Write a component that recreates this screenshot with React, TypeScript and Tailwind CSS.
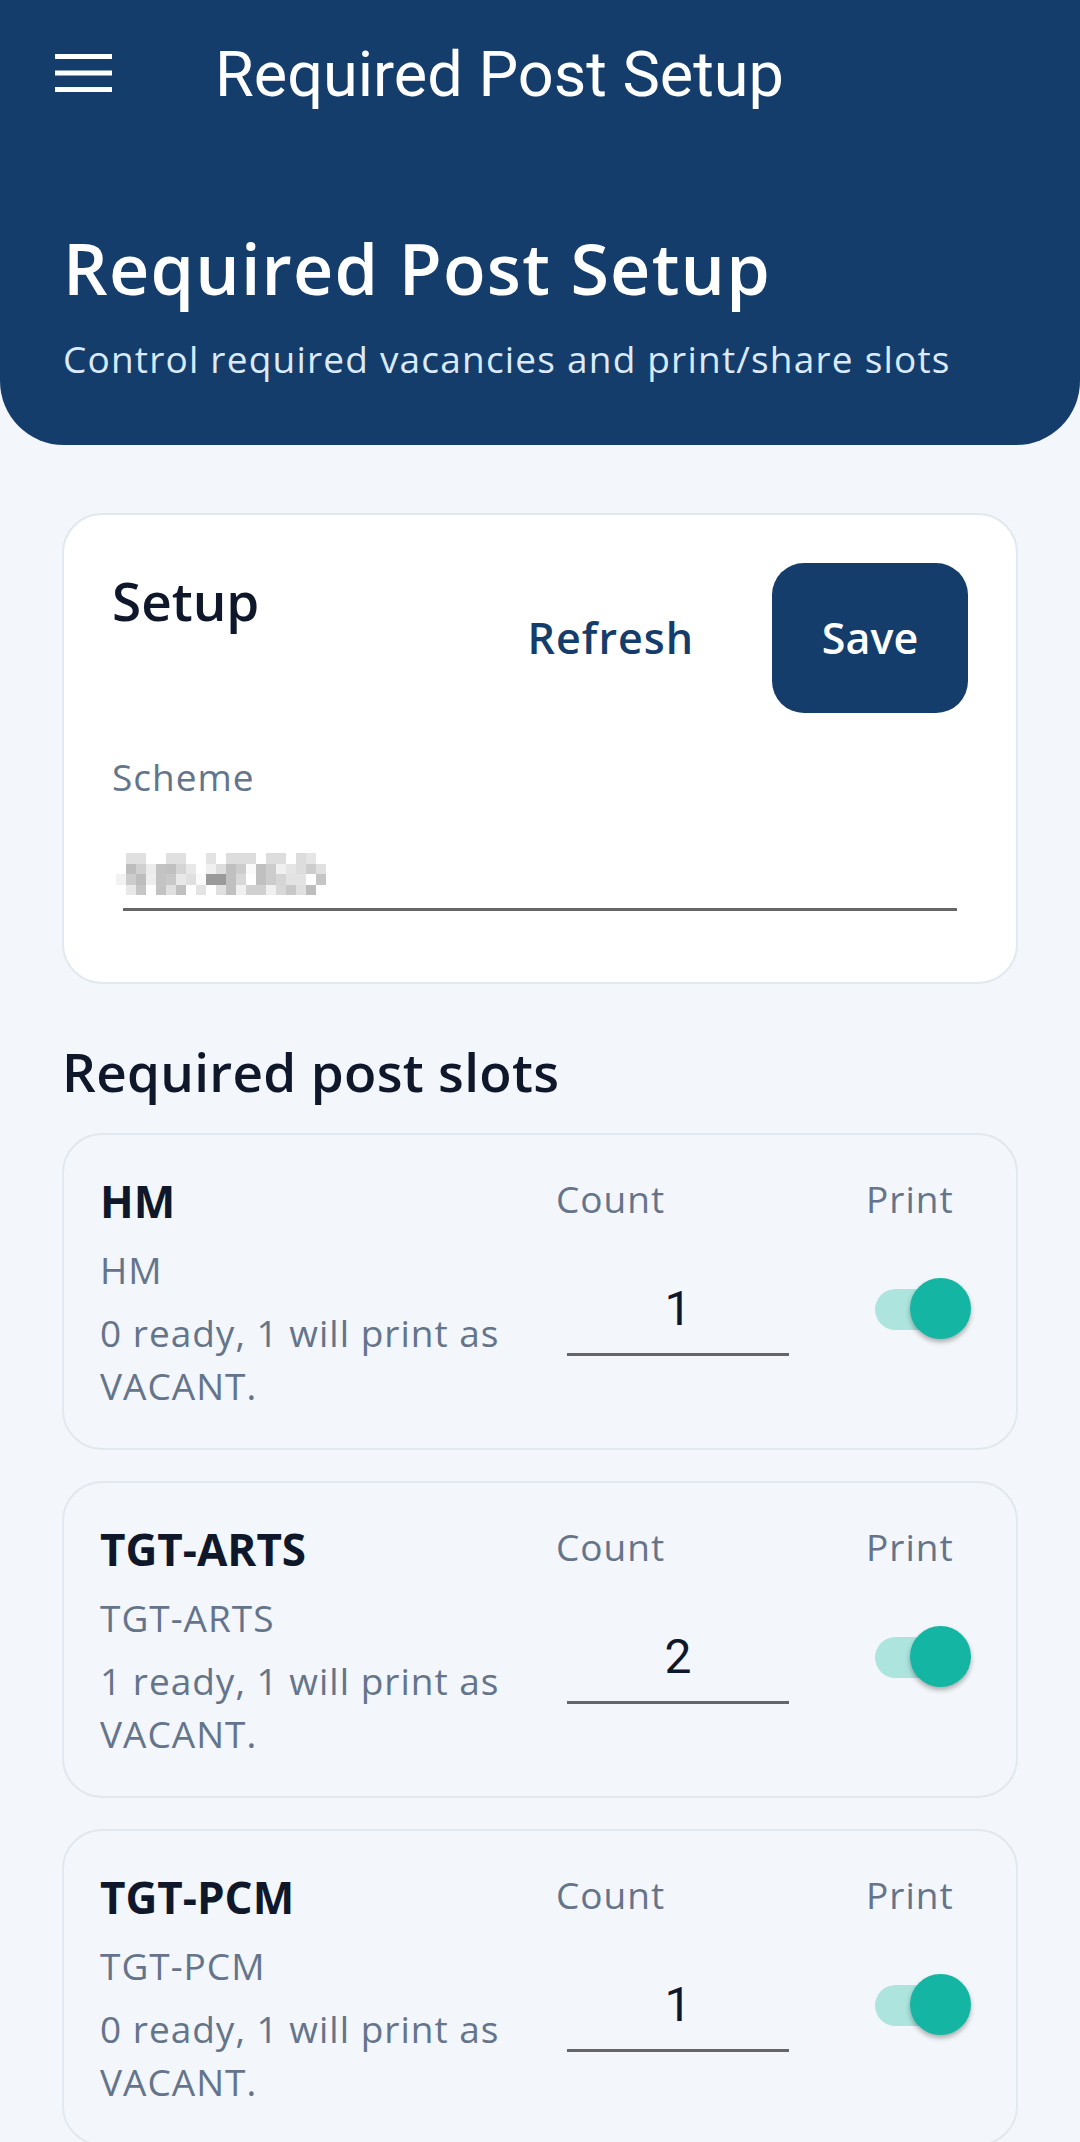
import { useState } from "react";

// Required post setup screen: scheme picker plus per-post slot counts and
// a print toggle for each slot.

const SANS = "font-['Open_Sans','Noto_Sans',sans-serif]";

// blurred scheme name, drawn as a mosaic like the privacy-masked screenshot
const MOSAIC: string[][] = [
  ["fff", "e0e0e0", "e0e0e0", "fff", "fff", "e0e0e0", "e0e0e0", "fff", "fff", "e3e3e3", "fff", "ddd", "ddd", "ddd", "fff", "ddd", "ddd", "fff", "ddd", "e5e5e5", "fff"],
  ["fff", "bdbdbd", "d0d0d0", "ececec", "c3c3c3", "c0c0c0", "d5d5d5", "e8e8e8", "fff", "f0f0f0", "ddd", "c0c0c0", "ccc", "fafafa", "c0c0c0", "ccc", "f0f0f0", "e5e5e5", "ddd", "cdcdcd", "e0e0e0"],
  ["f2f2f2", "ccc", "bdbdbd", "eee", "c3c3c3", "c8c8c8", "e8e8e8", "e0e0e0", "fafafa", "9a9a9a", "9a9a9a", "c0c0c0", "d8d8d8", "fff", "c0c0c0", "ccc", "d5d5d5", "e3e3e3", "e3e3e3", "fff", "c5c5c5"],
  ["fff", "e8e8e8", "c5c5c5", "fff", "c3c3c3", "e0e0e0", "c0c0c0", "fff", "e3e3e3", "fff", "e0e0e0", "c0c0c0", "f0f0f0", "d0d0d0", "d0d0d0", "f0f0f0", "d8d8d8", "c8c8c8", "e0e0e0", "bdbdbd", "fff"],
];

type Slot = { code: string; name: string; count: number; ready: number; vacant: number };

const SLOTS: Slot[] = [
  { code: "HM", name: "HM", count: 1, ready: 0, vacant: 1 },
  { code: "TGT-ARTS", name: "TGT-ARTS", count: 2, ready: 1, vacant: 1 },
  { code: "TGT-PCM", name: "TGT-PCM", count: 1, ready: 0, vacant: 1 },
];

function MenuIcon() {
  return (
    <svg width="57" height="38" viewBox="0 0 57 38" fill="#fff" aria-hidden="true">
      <rect x="0" y="0" width="57" height="5" />
      <rect x="0" y="16.5" width="57" height="5" />
      <rect x="0" y="33" width="57" height="5" />
    </svg>
  );
}

function Toggle({ on, onChange }: { on: boolean; onChange: () => void }) {
  return (
    <button
      type="button"
      role="switch"
      aria-checked={on}
      onClick={onChange}
      className="relative w-[96px] h-[61px] cursor-pointer"
    >
      <span
        className={
          on
            ? "absolute left-0 top-[11px] w-[86px] h-[41px] rounded-full bg-[#ade4de]"
            : "absolute left-0 top-[11px] w-[86px] h-[41px] rounded-full bg-[#cbd5e1]"
        }
      />
      <span
        className={
          on
            ? "absolute right-0 top-0 w-[61px] h-[61px] rounded-full bg-[#14b5a3] shadow-[0_3px_5px_rgba(0,0,0,0.3)]"
            : "absolute right-[35px] top-0 w-[61px] h-[61px] rounded-full bg-[#f8fafc] shadow-[0_3px_5px_rgba(0,0,0,0.3)]"
        }
      />
    </button>
  );
}

function SlotCard({ slot }: { slot: Slot }) {
  const [count, setCount] = useState(String(slot.count));
  const [print, setPrint] = useState(true);

  return (
    <div className="mx-[62px] h-[317px] rounded-[40px] border-2 border-[#e2e8f0] bg-[#f3f6fa] pt-[38px] pl-[36px] pr-[36px] flex">
      <div className="flex-1 min-w-0">
        <div className="text-[44px] leading-[57px] font-bold text-[#0f172a]">{slot.code}</div>
        <div className="mt-[14px] text-[37px] leading-[52px] tracking-[1px] text-[#64748b]">{slot.name}</div>
        <div className="mt-[10px] text-[37px] leading-[53px] tracking-[1px] text-[#64748b]">
          {slot.ready} ready, {slot.vacant} will print as VACANT.
        </div>
      </div>
      <div className="ml-[26px] w-[244px] shrink-0">
        <div className="text-[37px] leading-[52px] tracking-[1px] text-[#64748b]">Count</div>
        <div className="mx-[11px] mt-[56px] border-b-[3px] border-[#666] pb-[16px]">
          <input
            value={count}
            onChange={(e) => setCount(e.target.value)}
            inputMode="numeric"
            className="w-full bg-transparent text-center outline-none font-['Roboto',sans-serif] text-[48px] leading-[56px] h-[56px] text-[#0f172a]"
          />
        </div>
      </div>
      <div className="ml-[66px] w-[114px] shrink-0">
        <div className="text-[37px] leading-[52px] tracking-[1px] text-[#64748b]">Print</div>
        <div className="mt-[53px] ml-[9px]">
          <Toggle on={print} onChange={() => setPrint((p) => !p)} />
        </div>
      </div>
    </div>
  );
}

export default function App() {
  return (
    <div className={`min-h-screen w-[1080px] bg-[#f3f6fa] pb-[60px] ${SANS}`}>
      {/* app bar + page intro */}
      <header className="bg-[#143d6b] rounded-b-[64px] pb-[61px]">
        <div className="h-[150px] flex items-center">
          <button type="button" aria-label="Open menu" className="ml-[55px] mt-[-4px]">
            <MenuIcon />
          </button>
          <h2 className="ml-[103px] font-['Roboto',sans-serif] text-[63px] leading-[74px] text-white">
            Required Post Setup
          </h2>
        </div>
        <div className="px-[63px] pt-[76px]">
          <h1 className="text-[70px] leading-[84px] font-semibold tracking-[1.2px] text-white">
            Required Post Setup
          </h1>
          <p className="mt-[24px] text-[37px] leading-[50px] tracking-[1.2px] text-[#dbeafe]">
            Control required vacancies and print/share slots
          </p>
        </div>
      </header>

      {/* setup card */}
      <section className="mx-[62px] mt-[68px] rounded-[40px] border-2 border-[#e2e8f0] bg-white px-[48px] pt-[48px] pb-[71px]">
        <div className="flex items-start justify-between">
          <h3 className="mt-[6px] text-[53px] leading-[64px] font-semibold text-[#0f172a]">Setup</h3>
          <div className="flex items-center gap-[38px]">
            <button
              type="button"
              className="h-[150px] px-[40px] text-[43px] font-semibold tracking-[1px] text-[#143d6b] cursor-pointer"
            >
              Refresh
            </button>
            <button
              type="button"
              className="h-[150px] w-[196px] rounded-[32px] bg-[#143d6b] text-[43px] font-semibold text-white cursor-pointer"
            >
              Save
            </button>
          </div>
        </div>
        <div className="mt-[38px] text-[37px] leading-[52px] tracking-[1px] text-[#64748b]">Scheme</div>
        <div className="mx-[11px] mt-[30px] border-b-[3px] border-[#666] pt-[20px] pb-[13px]">
          <div className="-ml-[7px] grid grid-cols-[repeat(21,10px)] auto-rows-[10.5px] w-max">
            {MOSAIC.flatMap((row, r) =>
              row.map((c, i) => (
                <span key={`${r}-${i}`} style={{ backgroundColor: `#${c}` }} />
              )),
            )}
          </div>
        </div>
      </section>

      {/* slots */}
      <h3 className="mx-[62px] mt-[56px] text-[53px] leading-[64px] font-semibold tracking-[0.3px] text-[#0f172a]">
        Required post slots
      </h3>
      <div className="mt-[29px] flex flex-col gap-[31px]">
        {SLOTS.map((s) => (
          <SlotCard key={s.code} slot={s} />
        ))}
      </div>
    </div>
  );
}
